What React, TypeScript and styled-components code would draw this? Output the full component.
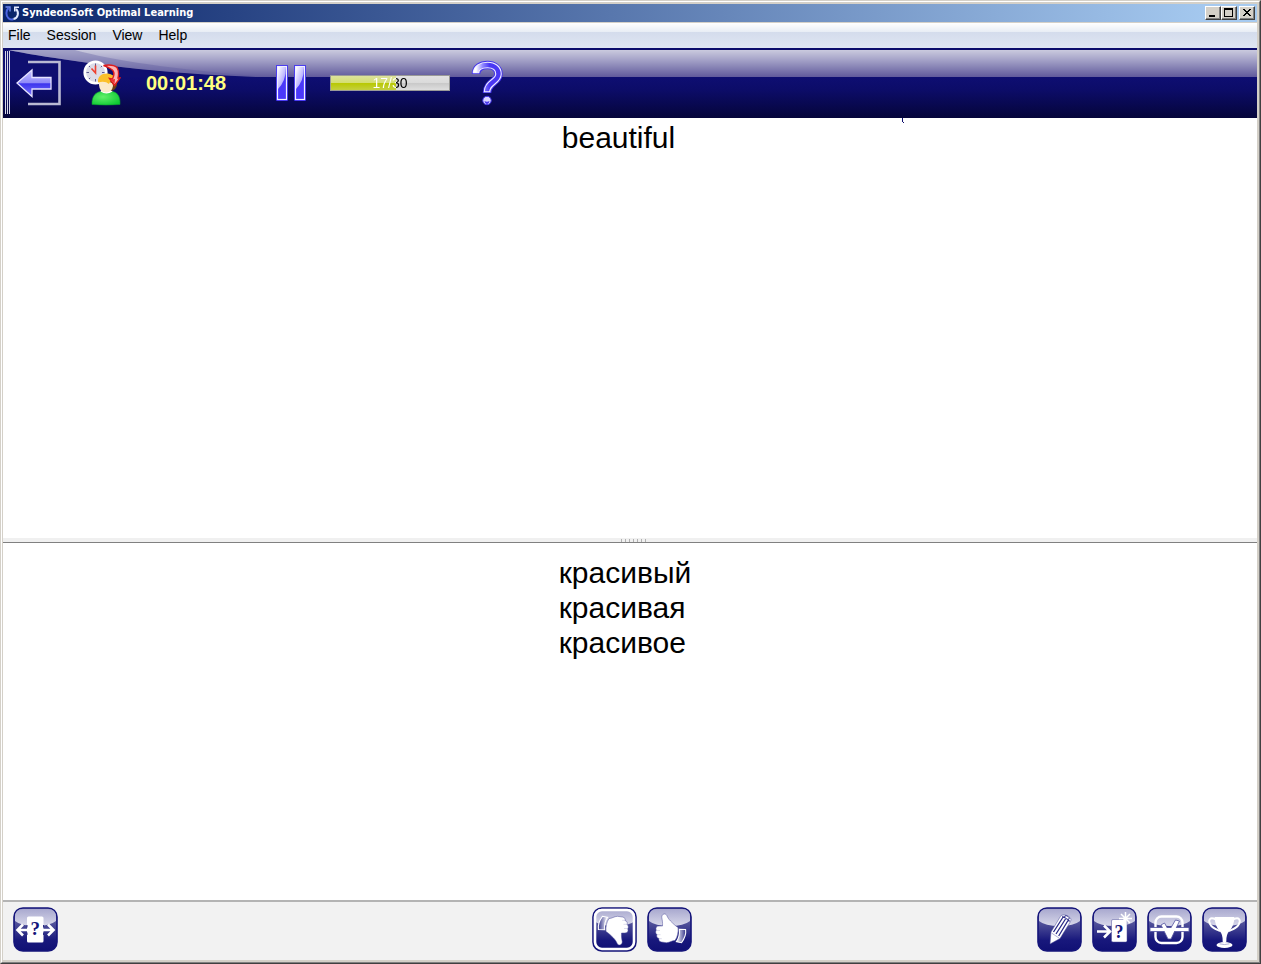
import React from "react";
import styled, { createGlobalStyle } from "styled-components";

const GlobalStyle = createGlobalStyle`
  * { box-sizing: border-box; }
  body { margin: 0; font-family: "Liberation Sans", Arial, sans-serif; color: #000; }
  button { font: inherit; color: inherit; padding: 0; margin: 0; border: 0; background: none; }
  svg { display: block; }
`;

const Frame = styled.div`
  min-height: 100vh;
  display: flex;
  border: 1px solid;
  border-color: #d4d0c8 #404040 #404040 #d4d0c8;
`;

const FrameInner = styled.div`
  flex: 1;
  min-width: 0;
  display: flex;
  flex-direction: column;
  padding: 2px 2px 2px 1px;
  background: #d4d0c8;
  border: 1px solid;
  border-color: #fff #808080 #808080 #fff;
`;

const TitleBar = styled.header`
  height: 18px;
  display: flex;
  align-items: center;
  padding: 0 2px 0 1px;
  gap: 2px;
  background: linear-gradient(90deg, #0a246a, #a6caf0 97%);
`;

const Title = styled.h1`
  flex: 1;
  margin: 0;
  color: #fff;
  font: bold 11px/18px "DejaVu Sans Condensed", "DejaVu Sans", sans-serif;
  white-space: nowrap;
`;

const CaptionGroup = styled.div`
  display: flex;
`;

const CaptionButton = styled.button`
  width: 16px;
  height: 14px;
  background: #d4d0c8;
  border: 1px solid;
  border-color: #fff #404040 #404040 #fff;
  box-shadow: inset -1px -1px #808080;
`;

const MenuBar = styled.nav`
  height: 27px;
  margin-top: 1px;
  padding: 0 5px 2px;
  display: flex;
  gap: 16px;
  background: linear-gradient(#fff, #e8edf5 9px, #d4dcec 9px, #dfe6f3 25px);
  border-bottom: 2px solid #0c0c6c;
`;

const MenuButton = styled.button`
  font-size: 14px;
  line-height: 22px;
`;

const Toolbar = styled.div`
  height: 68px;
  padding-bottom: 3px;
  position: relative;
  display: flex;
  align-items: center;
  background: linear-gradient(#cacade, #a8a6ca 9px, #605a9c 27px, #0e0e72 27px, #0c0c68 40px, #05053a 68px);
`;

const Shade = styled.svg`
  position: absolute;
  left: 0;
  top: 0;
`;

const InkMark = styled.svg`
  position: absolute;
  left: 71.6%;
  top: 100%;
`;

const Grip = styled.div`
  position: relative;
  width: 5px;
  height: 63px;
  margin: 0 6px 0 2px;
  background: repeating-linear-gradient(90deg, #d8d8ea 0 1px, transparent 1px 2px);
`;

const ToolButton = styled.button<{ $gap?: number }>`
  position: relative;
  margin-right: ${(p) => p.$gap ?? 0}px;
`;

const Timer = styled.time`
  position: relative;
  width: 80px;
  margin-right: 50px;
  color: #ffff80;
  font-size: 20px;
  font-weight: bold;
  line-height: 24px;
`;

const Progress = styled.div`
  width: 120px;
  height: 16px;
  margin-right: 21px;
  border: 1px solid #9a9a98;
  background: linear-gradient(#e2e2e2, #dadada 50%, #c8c8c8 50%, #dedede);
  position: relative;
`;

const ProgressFill = styled.div`
  height: 100%;
  background: linear-gradient(#dce29c, #d4de70 50%, #b8c800 50%, #c4d040);
`;

const ProgressText = styled.span`
  position: absolute;
  inset: 0;
  text-align: center;
  font-size: 14px;
  line-height: 14px;
  color: transparent;
  background-clip: text;
`;

const Pane = styled.section<{ $share: number }>`
  flex: ${(p) => p.$share} 1 0;
  background: #fff;
  display: flex;
  justify-content: center;
  font-size: 30px;
  line-height: 35px;
`;

const Question = styled.p`
  margin: 0;
  padding: 2px 23px 0 0;
`;

const Answers = styled.p`
  margin: 0;
  padding: 12px 10px 0 0;
`;

const Splitter = styled.div`
  height: 5px;
  display: flex;
  justify-content: center;
  background: #f0f0f0;
  border-bottom: 1px solid #808080;
`;

const SplitterGrip = styled.div`
  width: 26px;
  height: 3px;
  margin: 1px 0 0 7px;
  background: repeating-linear-gradient(90deg, #b0b0b0 0 1px, transparent 1px 4px);
`;

const Footer = styled.footer`
  height: 60px;
  padding: 0 10px 3px;
  display: grid;
  grid-template-columns: 1fr auto 1fr;
  align-items: center;
  background: #f2f2f2;
  border-top: 2px solid #b4b4b4;
`;

const ButtonGroup = styled.div<{ $end?: boolean }>`
  display: flex;
  gap: 10px;
  justify-content: ${(p) => (p.$end ? "flex-end" : "flex-start")};
`;

const CenterGroup = styled(ButtonGroup)`
  margin-left: 24px;
`;

const CardButton = styled.button`
  width: 45px;
  height: 45px;
`;

const Paints = styled.svg`
  position: absolute;
`;

function Defs() {
  return (
    <Paints width="0" height="0" aria-hidden="true">
      <defs>
        <linearGradient id="arrow" x1="0" y1="0" x2="0" y2="1">
          <stop offset="0" stopColor="#c8c4ff" /><stop offset=".48" stopColor="#8f8af8" />
          <stop offset=".52" stopColor="#3d35ee" /><stop offset="1" stopColor="#7a75fa" />
        </linearGradient>
        <linearGradient id="pauseGloss" x1="0" y1="0" x2="1" y2="1">
          <stop offset="0" stopColor="#fff" /><stop offset="1" stopColor="#8a80ff" />
        </linearGradient>
        <linearGradient id="tile" x1="0" y1="0" x2="0" y2="1">
          <stop offset="0" stopColor="#8484b8" /><stop offset=".4" stopColor="#4a4a96" />
          <stop offset=".75" stopColor="#18187c" /><stop offset="1" stopColor="#101074" />
        </linearGradient>
        <linearGradient id="gloss" x1="0" y1="0" x2="0" y2="1">
          <stop offset="0" stopColor="#a9a9cf" /><stop offset="1" stopColor="#d8d8ea" />
        </linearGradient>
        <linearGradient id="cuff" x1="0" y1="0" x2="1" y2="0">
          <stop offset="0" stopColor="#fff" /><stop offset="1" stopColor="#34348a" />
        </linearGradient>
        <linearGradient id="questionInk" x1="0" y1="0" x2="1" y2="0">
          <stop offset="0" stopColor="#fff" /><stop offset=".3" stopColor="#8f86ff" />
          <stop offset=".6" stopColor="#4a38f4" />
        </linearGradient>
        <radialGradient id="shirt" cx=".4" cy=".4" r=".7">
          <stop offset="0" stopColor="#62f06a" /><stop offset="1" stopColor="#0cc832" />
        </radialGradient>
      </defs>
    </Paints>
  );
}

function Tile({ children, framed }: { children: React.ReactNode; framed?: boolean }) {
  return (
    <svg width="45" height="45" viewBox="0 0 45 45">
      <rect x="1" y="1" width="43" height="43" rx="9" fill="url(#tile)" stroke="#14147a" strokeWidth="1.6" />
      <path d="M2 10Q2 2 10 2H35Q43 2 43 10V14Q37 19 22.500 19Q8 19 2 14Z" fill="url(#gloss)" />
      {framed && <rect x="3" y="3" width="39" height="39" rx="7" fill="none" stroke="#fff" strokeWidth="2.600" />}
      {children}
    </svg>
  );
}

const mark = { fontFamily: '"Liberation Serif", serif', fontWeight: "bold", textAnchor: "middle" as const, fill: "#14147a" };

function Hand() {
  return (
    <g>
      <path
        d="M15.500 19C15.800 15 15.200 13 14.800 10.500C14.500 7 18.300 5.700 19.800 8.500C20.800 10.500 21.500 12 23.500 14C26 16.500 28 18.500 31 20.500C31.500 25 30.500 30 28 33.500C25 33.500 23 35.500 19.500 35.700L14.500 35C12 34.500 11.500 33 12 31.500C9.800 31 9.300 29 10 27.500C8.500 26.500 8.300 24.500 9.300 23.200C8.300 21 9.500 18.900 12 19Z"
        fill="#fff" stroke="#4c4c98" strokeWidth=".5"
      />
      <path d="M32.300 22.200L38.600 22.500C39.300 27 37.500 31.500 34.500 35.700L29.300 34.700C32 31 32.900 27 32.300 22.200Z" fill="url(#cuff)" stroke="#fff" strokeWidth="1.100" />
      <path d="M9.500 23.500H13M10.200 27.700H13.500M12 31.700H14.800" stroke="#b8b8d8" strokeWidth=".5" />
    </g>
  );
}

export default function App() {
  const done = 17;
  const total = 30;
  const percent = Math.floor((done / total) * 100) - 1;
  return (
    <Frame>
      <GlobalStyle />
      <Defs />
      <FrameInner>
        <TitleBar>
          <svg width="16" height="16" viewBox="0 0 16 16" fill="none">
            <path d="M4.500 3C2 5.500 1.500 10.500 4.500 13.200C6 14.500 8 14.800 9.500 14" stroke="#4c64e0" strokeWidth="2" />
            <path d="M9.500 14C14 13 15.500 7.500 12 4" stroke="#e4eaff" strokeWidth="2" />
            <path d="M1.500 2H6V6.500" stroke="#6f88f0" strokeWidth="1.400" />
            <path d="M15 2.200H10.800V6.500" stroke="#e4eaff" strokeWidth="1.600" />
          </svg>
          <Title>SyndeonSoft Optimal Learning</Title>
          <CaptionGroup>
            <CaptionButton aria-label="Minimize">
              <svg width="14" height="12"><path d="M3 8h6v2H3z" /></svg>
            </CaptionButton>
            <CaptionButton aria-label="Maximize">
              <svg width="14" height="12"><path d="M2 1h9v9H2zM3 3v6h7V3z" fillRule="evenodd" /></svg>
            </CaptionButton>
          </CaptionGroup>
          <CaptionButton aria-label="Close">
            <svg width="14" height="12" shapeRendering="crispEdges"><path d="M3 2h2v1h1v1h2V3h1V2h2v1h-1v1H9v1H8v1h1v1h1v1h1v1H9V8H8V7H6v1H5v1H3V8h1V7h1V6h1V5H5V4H4V3H3z" /></svg>
          </CaptionButton>
        </TitleBar>

        <MenuBar>
          {["File", "Session", "View", "Help"].map((m) => <MenuButton key={m}>{m}</MenuButton>)}
        </MenuBar>

        <Toolbar>
          <Shade width="270" height="28" viewBox="0 0 270 28" aria-hidden="true">
            <path d="M0 0H5Q30 5 72 11Q150 23 262 27.500H0Z" fill="#0f0f70" />
            <path d="M5 0H72Q130 16 262 27Q150 23 72 11Q30 5 5 0Z" fill="#5c5a9e" opacity=".35" />
          </Shade>
          <InkMark width="4" height="6" viewBox="0 0 4 6" aria-hidden="true">
            <path d="M1 0h1v4h1v1H2V4H1z" fill="#10106e" />
          </InkMark>
          <Grip />
          <ToolButton $gap={22} aria-label="Leave session">
            <svg width="45" height="46" viewBox="0 0 45 46">
              <path d="M12 2H43.500V44H12" fill="none" stroke="#b9b9d2" strokeWidth="2.600" />
              <path d="M1 23L16 10V17.500H35V29H16V36.500Z" fill="url(#arrow)" stroke="#e6e4ff" strokeWidth="1.300" />
            </svg>
          </ToolButton>
          <ToolButton $gap={25} aria-label="Session time">
            <svg width="38" height="46" viewBox="0 0 38 46">
              <circle cx="12.500" cy="12.500" r="10.800" fill="#dcdce8" stroke="#fff" strokeWidth="2.600" />
              <path d="M12.500 3.500V6M12.500 19V21.500M3.500 12.500H6M19 12.500H21.500M6 6L7.200 7.200M19 6L17.800 7.200M6 19L7.200 17.800" stroke="#5c5c90" />
              <path d="M8.500 8.500L12.500 13V5.500" fill="none" stroke="#ee4030" strokeWidth="1.600" />
              <path d="M9 44.500C8.500 36 13 32 18 31.500H29C34 32 37.500 36 37 44.500Q23 45.600 9 44.500Z" fill="url(#shirt)" stroke="#08982c" strokeWidth=".6" />
              <path d="M17.500 31.500Q23.500 35.500 29.500 31.500L28 29H19Z" fill="#fff" />
              <path d="M24 15Q34 17 34 25Q33 30 28 31L24 24Z" fill="#6b4014" />
              <path d="M16 21Q22 18 25 22Q30 22 30 26Q29 32.500 23 32.500Q16.500 32.500 16 25Z" fill="#fbe9c9" />
              <path d="M15 22.500C14.500 16 19 13 25 13.500Q31 14.500 33 19.500Q27 19.500 26 24Q22 20.500 15 22.500Z" fill="#fbc02b" />
              <path d="M20.500 5.500Q30 4 34 7.500Q36.500 12 35 18L37 18L31.500 25.500L26.500 18.500L29.500 19Q33 12 28 9Q25 7 20.500 5.500Z" fill="#fbb4b4" stroke="#e01c1c" strokeWidth="1.400" />
              <path d="M32 19L31.500 24L28 19.800Z" fill="#e83030" />
            </svg>
          </ToolButton>
          <Timer>00:01:48</Timer>
          <ToolButton $gap={22} aria-label="Pause">
            <svg width="32" height="36" viewBox="0 0 32 36">
              {[1, 19].map((x) => (
                <g key={x}>
                  <rect x={x - 1} y="0" width="12" height="36" rx="1" fill="#3829ef" />
                  <rect x={x + 0.5} y="1.500" width="9" height="33" fill="#4a38fa" stroke="#f0f0ff" strokeWidth="1.200" />
                  <path d={`M${x + 1} 2H${x + 9}Q${x + 9} 16 ${x + 1} 24Z`} fill="url(#pauseGloss)" />
                </g>
              ))}
            </svg>
          </ToolButton>
          <Progress role="progressbar" aria-valuenow={done} aria-valuemax={total} aria-label="Cards">
            <ProgressFill style={{ width: `${percent}%` }} />
            <ProgressText style={{ backgroundImage: `linear-gradient(90deg, #fff ${percent}%, #000 ${percent}%)` }}>
              {done}/{total}
            </ProgressText>
          </Progress>
          <ToolButton aria-label="Help">
            <svg width="34" height="46" viewBox="0 0 34 46">
              <path d="M5 14C5 8 10 5 16.500 5C23 5 27.500 8.500 27.500 14C27.500 22 16 22 16 33" fill="none" stroke="#4334ed" strokeWidth="8.500" />
              <path d="M5 13.200C5 8 10 5 16.500 5C23 5 27.500 8.500 27.500 14C27.500 22 16 22 16 32.200" fill="none" stroke="#f0eeff" strokeWidth="6.600" />
              <path d="M5 12.500C5 8 10 5 16.500 5C23 5 27.500 8.500 27.500 14C27.500 22 16 22 16 31.200" fill="none" stroke="url(#questionInk)" strokeWidth="4.400" />
              <circle cx="16" cy="40.500" r="4.200" fill="#dcd8ff" stroke="#4334ed" />
              <path d="M13.500 41Q16 42.500 18.500 41Q18 44 16 44Q14 44 13.500 41Z" fill="#4938f0" />
            </svg>
          </ToolButton>
        </Toolbar>

        <Pane $share={420}>
          <Question>beautiful</Question>
        </Pane>
        <Splitter role="separator"><SplitterGrip /></Splitter>
        <Pane $share={357}>
          <Answers lang="ru">красивый<br />красивая<br />красивое</Answers>
        </Pane>

        <Footer>
          <ButtonGroup>
            <CardButton aria-label="Show card">
              <Tile>
                <rect x="14" y="9.500" width="16.500" height="26" rx="1.500" fill="#fff" />
                <path d="M15 23H5M10 17.500L4.500 23L10 28.500M30 23H40M35 17.500L40.500 23L35 28.500" fill="none" stroke="#fff" strokeWidth="2.600" />
                <path d="M14 20.500V18M14 25.500V28M30.500 20.500V18M30.500 25.500V28" stroke="#2c2c86" />
                <text x="22.300" y="28" fontSize="19" {...mark}>?</text>
              </Tile>
            </CardButton>
          </ButtonGroup>
          <CenterGroup>
            <CardButton aria-label="Wrong">
              <Tile framed><g transform="rotate(180 22.500 22.500)"><Hand /></g></Tile>
            </CardButton>
            <CardButton aria-label="Right"><Tile><Hand /></Tile></CardButton>
          </CenterGroup>
          <ButtonGroup $end>
            <CardButton aria-label="Edit card">
              <Tile>
                <path d="M24 8.500Q29 6.500 33.500 11Q34.500 12.500 33.500 14.500L23 31.500L13 37L14 25Z" fill="#fff" stroke="#4c4c98" strokeWidth=".5" />
                <path d="M25 10Q30 10 32.500 14.500M16.500 25L25.500 11M19 27L28.500 12M21.700 29L31 13.500" stroke="#282886" strokeWidth="1.300" fill="none" />
                <ellipse cx="30" cy="10.500" rx="2.600" ry="1.400" transform="rotate(35 30 10.500)" fill="#fff" stroke="#282886" strokeWidth=".8" />
                <path d="M14.500 26L22 31" stroke="#9c9cca" strokeWidth=".8" />
              </Tile>
            </CardButton>
            <CardButton aria-label="New card">
              <Tile>
                <rect x="19.500" y="12.500" width="15.500" height="22.500" rx="1.500" fill="#fff" stroke="#4c4c98" strokeWidth=".5" />
                <text x="27" y="30.500" fontSize="18" {...mark}>?</text>
                <path d="M5 24.500H17M12 18.500L18 24.500L12 30.500" fill="none" stroke="#fff" strokeWidth="2.600" />
                <path d="M33.500 5V18M27 11.500H40M29 7L38 16M38 7L29 16" stroke="#fff" strokeWidth="1.500" />
              </Tile>
            </CardButton>
            <CardButton aria-label="Check card">
              <Tile>
                <rect x="8.500" y="9.500" width="27" height="26.500" rx="6" fill="none" stroke="#fff" strokeWidth="2.400" />
                <rect x="3" y="20.500" width="39" height="4" fill="#fff" stroke="#5050a0" strokeWidth=".8" />
                <path d="M14 18L17.500 16L22 24L28.500 13L32.500 14L24 32H21Z" fill="#fff" stroke="#5050a0" strokeWidth=".8" />
                <path d="M12 22.500H33" stroke="#fff" strokeWidth="3" />
              </Tile>
            </CardButton>
            <CardButton aria-label="Results">
              <Tile>
                <path d="M13.500 12.500C8 9.500 6 13 8 17C10 21 13 22 18 24M31.500 12.500C37 9.500 39 13 37 17C35 21 32 22 27 24" fill="none" stroke="#fff" strokeWidth="1.900" />
                <path d="M12.500 10H32.500Q32 19 27.500 24Q24 27 24.300 35H20.700Q21 27 17.500 24Q13 19 12.500 10Z" fill="#fff" />
                <ellipse cx="22.500" cy="38" rx="8" ry="3" fill="#fff" />
                <path d="M17.500 36.800Q22.500 38.300 27.500 36.800" fill="none" stroke="#9c9cca" strokeWidth=".8" />
              </Tile>
            </CardButton>
          </ButtonGroup>
        </Footer>
      </FrameInner>
    </Frame>
  );
}
